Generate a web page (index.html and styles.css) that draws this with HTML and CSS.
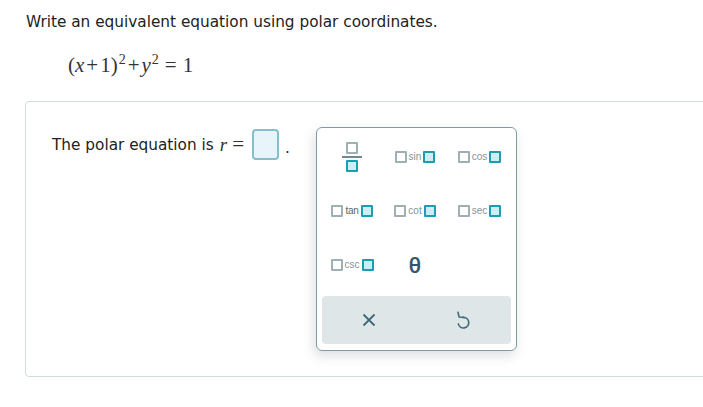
FILE: index.html
```html
<!DOCTYPE html>
<html>
<head>
<meta charset="utf-8">
<link rel="stylesheet" href="styles.css">
</head>
<body>
<div class="page">
  <p class="title">Write an equivalent equation using polar coordinates.</p>
  <div class="equation"><span class="paren">(</span><i>x</i><span class="op">+</span>1<span class="paren">)</span><sup>2</sup><span class="op">+</span><i>y</i><sup>2</sup><span class="eq">=</span>1</div>
  <div class="card">
    <div class="prompt">
      <span>The polar equation is</span>
      <i class="var">r</i>
      <span class="peq">=</span>
      <span class="answer"></span>
      <span class="dot">.</span>
    </div>
    <div class="keypad">
      <div class="grid">
        <div class="key">
          <div class="frac"><span class="bx gray"></span><span class="bar"></span><span class="bx teal"></span></div>
        </div>
        <div class="key"><span class="bx gray"></span><span class="fn">sin</span><span class="bx teal"></span></div>
        <div class="key"><span class="bx gray"></span><span class="fn">cos</span><span class="bx teal"></span></div>
        <div class="key"><span class="bx gray"></span><span class="fn dark">tan</span><span class="bx teal"></span></div>
        <div class="key"><span class="bx gray"></span><span class="fn">cot</span><span class="bx teal"></span></div>
        <div class="key"><span class="bx gray"></span><span class="fn">sec</span><span class="bx teal"></span></div>
        <div class="key"><span class="bx gray"></span><span class="fn">csc</span><span class="bx teal"></span></div>
        <div class="key"><span class="theta">θ</span></div>
        <div class="key"></div>
      </div>
      <div class="actions">
        <div class="act">
          <svg width="14" height="14" viewBox="0 0 14 14"><path d="M1.5 1.5 L12.5 12.5 M12.5 1.5 L1.5 12.5" stroke="#3d6a7a" stroke-width="1.8" fill="none"/></svg>
        </div>
        <div class="act">
          <svg width="17" height="18" viewBox="0 0 16 17"><path d="M8 6 A5 5 0 1 1 3.1 12.2" stroke="#3d6a7a" stroke-width="1.5" fill="none" stroke-linecap="round"/><path d="M2.8 1.2 L3.8 5.6 L8 6" stroke="#3d6a7a" stroke-width="1.5" fill="none" stroke-linecap="round" stroke-linejoin="round"/></svg>
        </div>
      </div>
    </div>
  </div>
</div>
</body>
</html>
```
FILE: styles.css
```css
html, body {
  margin: 0;
  padding: 0;
  background: #ffffff;
}
.page {
  padding-top: 12px;
  font-family: "DejaVu Sans", Verdana, sans-serif;
  color: #222;
}
.title {
  margin: 0 0 0 26px;
  font-size: 15.3px;
  line-height: 20px;
}
.equation {
  margin: 21px 0 0 68px;
  font-family: "Liberation Serif", "Times New Roman", serif;
  font-size: 21px;
  line-height: 24px;
  color: #333;
  height: 24px;
}
.equation i {
  font-style: italic;
}
.equation .op {
  margin: 0 2px;
}
.equation .eq {
  margin: 0 6px 0 6px;
}
.equation sup {
  font-size: 14px;
  line-height: 0;
  vertical-align: 8px;
  margin-left: 1px;
}
.card {
  position: relative;
  margin: 24px 0 0 25px;
  width: 700px;
  height: 276px;
  border: 1px solid #d3dcdf;
  border-radius: 4px;
  box-sizing: border-box;
}
.prompt {
  display: flex;
  align-items: center;
  margin: 27px 0 0 26px;
  font-size: 15.3px;
  color: #222;
  height: 31px;
}
.prompt .var {
  font-family: "Liberation Serif", "Times New Roman", serif;
  font-size: 19px;
  margin-left: 6px;
  color: #333;
}
.prompt .peq {
  font-family: "Liberation Serif", serif;
  font-size: 21px;
  margin-left: 5px;
  color: #333;
}
.answer {
  display: inline-block;
  width: 27px;
  height: 31px;
  box-sizing: border-box;
  border: 2px solid #86bfc9;
  background: #e7f5fa;
  border-radius: 4px;
  margin-left: 8px;
}
.dot {
  margin-left: 6px;
  align-self: flex-end;
  margin-bottom: 3px;
}
.keypad {
  position: absolute;
  left: 290px;
  top: 25px;
  width: 201px;
  height: 224px;
  box-sizing: border-box;
  border: 1px solid #7f9ca5;
  border-radius: 6px;
  background: #fff;
  padding: 2px 5px 5px 5px;
  box-shadow: -2px 5px 12px rgba(60, 80, 90, 0.18);
  display: flex;
  flex-direction: column;
}
.grid {
  display: grid;
  grid-template-columns: 60px 66px 63px;
  grid-template-rows: repeat(3, 54px);
}
.key {
  display: flex;
  align-items: center;
  justify-content: center;
  gap: 2px;
}
.bx {
  display: inline-block;
  width: 12px;
  height: 12px;
  box-sizing: border-box;
  border-radius: 1px;
}
.bx.gray {
  border: 2px solid #9fb0b5;
  background: #fff;
}
.bx.teal {
  border: 2px solid #1b9db2;
  background: #ccedf3;
}
.fn {
  font-family: "Liberation Sans", Arial, sans-serif;
  font-size: 10px;
  color: #86959a;
  line-height: 12px;
}
.fn.dark {
  color: #55676d;
  letter-spacing: -0.3px;
}
.frac {
  display: flex;
  flex-direction: column;
  align-items: center;
  gap: 2px;
}
.frac .bar {
  width: 20px;
  height: 2px;
  background: #6f8a92;
}
.theta {
  font-family: Roboto, sans-serif;
  font-weight: 500;
  font-size: 22px;
  color: #2f5a69;
}
.actions {
  margin-top: 4px;
  height: 48px;
  background: #dfe6e8;
  border-radius: 4px;
  display: flex;
}
.act {
  flex: 1;
  display: flex;
  align-items: center;
  justify-content: center;
}
```
